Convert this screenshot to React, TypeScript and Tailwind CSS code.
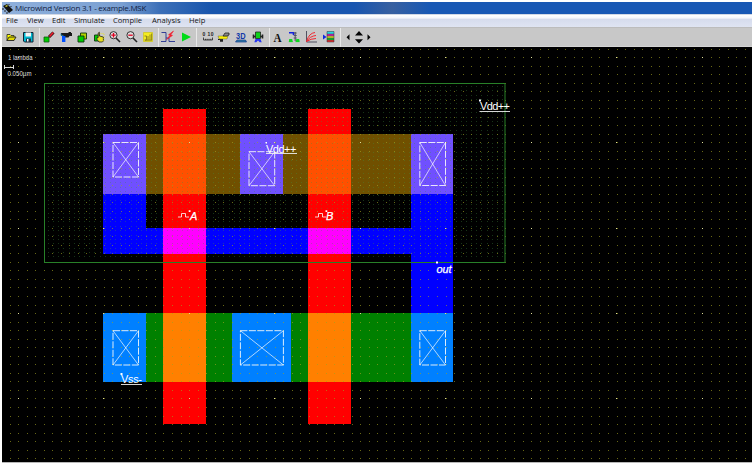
import type { ReactNode } from "react";

const menus: [string, string][] = [
  ["File", "w-[21px]"],
  ["View", "w-[25px]"],
  ["Edit", "w-[22px]"],
  ["Simulate", "w-[39px]"],
  ["Compile", "w-[39px]"],
  ["Analysis", "w-[37px]"],
  ["Help", "w-[30px]"],
];

function Icon({ children, w = "w-[16.5px]" }: { children: ReactNode; w?: string }) {
  return (
    <button className={`${w} flex h-4 shrink-0 items-center justify-center`}>
      <svg className="h-3 w-3 shrink-0 overflow-visible" viewBox="0 0 12 12" fill="none">
        {children}
      </svg>
    </button>
  );
}

function Sep() {
  return <span className="h-[19px] w-px shrink-0 bg-[#e8e8e8]" />;
}

function Lens({ plus }: { plus?: boolean }) {
  return (
    <Icon>
      <circle cx="4.5" cy="4.2" r="3.6" fill="#ddd" stroke="#222" strokeWidth="0.9" />
      <path d="M7 7 11 11" stroke="#222" strokeWidth="1.6" />
      <path d={plus ? "M2.3 4.2h4.4M4.5 2v4.4" : "M2.3 4.2h4.4"} stroke="#e00020" strokeWidth="1.3" />
    </Icon>
  );
}

function Toolbar() {
  return (
    <div className="flex h-5 items-center border-y border-t-[#bcbcbc] border-b-[#d4d4d4] bg-[#c8c8c8] pl-px">
      <Icon>
        <path d="M2 10V3.5h3l1 1h3V6" fill="#ff0" stroke="#222" strokeWidth="0.8" />
        <path d="M2 9.5 4 6h7L9 9.5z" fill="#e0d800" stroke="#222" strokeWidth="0.9" />
      </Icon>
      <Icon>
        <path d="M1.5 1.5h9.5v9.5H2.5l-1-1z" fill="#00b8d0" stroke="#123" />
        <path d="M3.5 1.5h5.5v4H3.5z" fill="#f4f4f4" />
        <path d="M4 7.5h5V11H4z" fill="#234" />
        <path d="M5 8h1.5v2.5H5z" fill="#fff" />
      </Icon>
      <span className="w-[3px]" />
      <Sep />
      <span className="w-px" />
      <Icon>
        <path d="M1 6h5v5H1z" fill="#0c0" stroke="#151" strokeWidth="0.8" />
        <path d="m6 6 4.5-4.5" stroke="#301010" strokeWidth="3" />
        <path d="m6.5 5.5 3.7-4" stroke="#f02030" strokeWidth="1.7" />
      </Icon>
      <Icon>
        <path d="M1 2h7.5V1H11v1h1v3H9.5l-1 1.5H5V5H1z" fill="#181818" />
        <path d="M2 5h3.4v6H2z" fill="#0050ff" />
        <path d="M1 2.4v2h2.5" stroke="#28b" strokeWidth="0.8" />
      </Icon>
      <Icon>
        <path d="M4.5 2h6v6h-6z" fill="#b0d000" stroke="#131" strokeWidth="0.9" />
        <path d="M2 5h6v6H2z" fill="#0c0" stroke="#131" strokeWidth="0.9" />
      </Icon>
      <Icon>
        <path d="M1.5 4h5v6h-5z" fill="#0c0" stroke="#131" strokeWidth="0.9" />
        <path d="M4 8.5V6.5h1.2V2l1.2-.8V5l4 1v4l-1 1H6z" fill="#e8e020" stroke="#222" strokeWidth="0.8" />
        <path d="M7.5 2.5H11V10" stroke="#e8e020" strokeWidth="0.8" strokeDasharray="1 1" />
      </Icon>
      <Lens plus />
      <Lens />
      <Icon>
        <path d="M1.5 1.5h9v9h-9z" fill="#f4ec20" stroke="#d0c820" strokeWidth="0.8" />
        <path d="M2.5 5h2v4h-2M6 9V5M8 9V3.5M9.6 9V2.5M3 9.2h7" stroke="#88801a" strokeWidth="0.9" />
      </Icon>
      <span className="w-px" />
      <Sep />
      <span className="w-px" />
      <Icon w="w-[17.5px]">
        <path d="M-.5 1.5H4v9H-1M4 7h3v3.5h6" stroke="#223090" strokeWidth="0.9" />
        <path d="M11.5 0 6.5 3.8l1.6.4L4.5 8.6l6-4.2-1.7-.6z" fill="#f02030" stroke="#f02030" strokeWidth="0.6" />
      </Icon>
      <Icon w="w-[17.5px]">
        <path d="M2 1.5 11 6 2 10.5z" fill="#00dc18" />
      </Icon>
      <span className="w-px" />
      <Sep />
      <span className="w-[3px]" />
      <Icon>
        <path d="M1.5 6.5V9h9V6.5M3.5 9V7.8M5.2 9V7.8M7 9V7.8M8.8 9V7.8" stroke="#222" strokeWidth="0.8" />
        <text x="0.5" y="5.4" fontSize="5" textLength="11" className="font-['Liberation_Sans'] font-bold" fill="#222">0 10</text>
      </Icon>
      <Icon>
        <path d="M0 8h5v2.8H2V9H0z" fill="#222" />
        <path d="M0 5h10l-1 3H1z" fill="#f8f000" stroke="#665" strokeWidth="0.5" />
        <path d="m5 5 2-3h4v2L9 5z" fill="#888" stroke="#222" strokeWidth="0.8" />
      </Icon>
      <Icon>
        <text x="1" y="8" fontSize="9" textLength="9.5" lengthAdjust="spacingAndGlyphs" className="font-['Liberation_Sans'] font-bold" fill="#1238a8">3D</text>
        <path d="m2 9-1.5 2H11.5l-1-2z" fill="#3480a0" stroke="#123890" strokeWidth="0.7" />
      </Icon>
      <Icon w="w-[17.5px]">
        <path d="M1.5 3.5v4M10.5 3.5v4M1 5.5h10" stroke="#222" strokeWidth="1.6" />
        <path d="M3.5 1h5v6.5h-5z" fill="#10d018" stroke="#222" strokeWidth="0.8" />
        <path d="m3.5 8-1.2 3.2h2L6 9.6l1.7 1.6h2L8.5 8z" fill="#2838f0" />
      </Icon>
      <span className="w-[2.5px]" />
      <Sep />
      <Icon w="w-[16px]">
        <text x="1.5" y="10.5" fontSize="12" textLength="8" lengthAdjust="spacingAndGlyphs" className="font-['Liberation_Serif'] font-bold" fill="#111">A</text>
      </Icon>
      <Icon>
        <path d="M1 1.8h4.5M5.5 1v3" stroke="#1020e0" strokeWidth="1.6" />
        <path d="M7.2 1v9M5.7 2h3M5.7 4.5h3M5.7 7h3" stroke="#556" strokeWidth="1.1" />
        <path d="M1.5 8.5h2.5v2H1.5zM8.5 8.5H11v2H8.5zM.8 10.6h4M7.5 10.6h4" stroke="#10d820" fill="#10d820" strokeWidth="1" />
      </Icon>
      <Icon w="w-[17px]">
        <path d="M1.5 0v11H12" stroke="#445" strokeWidth="0.9" />
        <path d="M1.5 10.5Q4 2 10 1.5M1.5 10.5Q5 5 11 4.5M1.5 10.5Q6 7.5 11 7.5" stroke="#f02830" />
      </Icon>
      <Icon w="w-[18px]">
        <path d="M4 .5h7V3H4z" fill="#28d8e0" />
        <path d="M4 3h7v2H4z" fill="#d020b0" />
        <path d="M4 5h7v2H4z" fill="#e0dc20" />
        <path d="M4 7h7v2H4z" fill="#10c028" />
        <path d="M4 9h7v2H4z" fill="#e83028" />
        <path d="M4 .5h7V11H4zM4 3h7M4 5h7M4 7h7M4 9h7" stroke="#334" strokeWidth="0.5" />
        <path d="M0 3.5v5L3.5 6z" fill="#1028e0" />
      </Icon>
      <span className="w-[2px]" />
      <Sep />
      <svg className="ml-[5px] h-[14px] w-[26px]" viewBox="0 -1 26 14" fill="#050505">
        <path d="M3.5 3.2v6L.5 6.2zM9 4.5l4-4.5 4 4.5zM9 8.2h8l-4 4.3zM21.5 3.2v6l3-3z" />
      </svg>
    </div>
  );
}

type Box = [number, number, number, number, string];

const layers: Box[] = [
  [163, 109, 43, 315, "#ff0000"],
  [308, 109, 43, 315, "#ff0000"],
  [103, 193, 43, 60, "#0000ff"],
  [146, 228, 307, 26, "#0000ff"],
  [103, 228, 43, 26, "#0000ff"],
  [411, 193, 42, 120, "#0000ff"],
  [163, 228, 43, 26, "#ff00ff"],
  [308, 228, 43, 26, "#ff00ff"],
  [103, 134, 350, 60, "#705000"],
  [103, 134, 43, 60, "#7050ff"],
  [240, 134, 43, 60, "#7050ff"],
  [411, 134, 42, 60, "#7050ff"],
  [163, 134, 43, 60, "#ff5000"],
  [308, 134, 43, 60, "#ff5000"],
  [103, 313, 350, 69, "#008000"],
  [103, 313, 43, 69, "#0080ff"],
  [232, 313, 59, 69, "#0080ff"],
  [411, 313, 42, 69, "#0080ff"],
  [163, 313, 43, 69, "#ff8000"],
  [308, 313, 43, 69, "#ff8000"],
];

const contacts: [number, number, number, number][] = [
  [113, 142.5, 25.5, 34.5],
  [249, 151.7, 25.7, 34],
  [419.8, 142.5, 25.7, 43],
  [113, 330.7, 25.5, 34.3],
  [240.4, 330.7, 43, 34.3],
  [419.8, 330.7, 25.7, 34.3],
];

const range = (n: number) => Array.from({ length: n }, (_, i) => i);

function Layout() {
  return (
    <svg
      className="block h-[415px] w-[750px] bg-black font-['Liberation_Sans',Arial,sans-serif]"
      viewBox="2 47 750 415"
    >
      <g shapeRendering="crispEdges">
        {layers.map(([x, y, width, height, fill], i) => (
          <rect key={i} x={x} y={y} width={width} height={height} fill={fill} />
        ))}
        {range(40).map((r) =>
          range(89).map((c) => (
            <rect key={`w${r}-${c}`} x={Math.round(48 + c * 5.16)} y={Math.round(86 + r * 4.37)} width="1" height="1" fill="#409040" opacity="0.36" />
          )),
        )}
        {range(49).map((r) =>
          range(87).map((c) => (
            <rect key={`g${r}-${c}`} x={Math.round(9.5 + c * 8.55)} y={Math.round(48.5 + r * 8.535)} width="1" height="1" fill="#a0a020" opacity="0.65" />
          )),
        )}
        {range(5).map((r) =>
          range(9).map((c) => (
            <rect key={`m${r}-${c}`} x={Math.round(17.7 + c * 85.5)} y={Math.round(57 + r * 85.35)} width="1" height="1" fill="#e0e098" />
          )),
        )}
      </g>
      <rect x="44.5" y="83.5" width="460.5" height="179" fill="none" stroke="#288028" />
      {contacts.map(([x, y, w, h], i) => (
        <g key={i} stroke="#fff" strokeWidth="0.85" fill="none">
          <rect x={x} y={y} width={w} height={h} strokeDasharray="7 1.5" />
          <path strokeOpacity="0.8" d={`M${x} ${y}l${w} ${h}M${x + w} ${y}l${-w} ${h}`} />
        </g>
      ))}
      <g fill="#fff" fontSize="11">
        <text x="480" y="110" textLength="30">Vdd++</text>
        <text x="266" y="152.5" textLength="30.5">Vdd++</text>
        <text x="121" y="383" textLength="21">Vss-</text>
        <g fontStyle="italic" stroke="#fff" strokeWidth="0.25">
          <text x="190" y="220.3">A</text>
          <text x="326" y="220.3">B</text>
          <text x="436.5" y="272.5" textLength="15">out</text>
        </g>
        <g fontSize="6.3" fill="#ddd">
          <text x="8" y="60" textLength="24.5" lengthAdjust="spacingAndGlyphs">1 lambda</text>
          <text x="7.5" y="75.5" textLength="24" lengthAdjust="spacingAndGlyphs">0.050µm</text>
        </g>
      </g>
      <path d="M479.5 111.5h30.5M266 153.5h31M121 384.5h21M4.5 67.5h9M4.5 65v4M13.5 65v4" stroke="#eee" strokeWidth="0.9" />
      <path d="M178 217h3.5v-3.5h4V217h3.5M315 217h3.5v-3.5h4V217h3.5" stroke="#fff" strokeWidth="0.8" fill="none" />
      <path d="M479 99.5h2v2h-2zM265.5 142h1.5v1.5h-1.5zM120.5 373h2v2h-2zM188.7 210.2h1.8v1.8h-1.8zM325.5 210.2h1.8v1.8h-1.8zM436 261.5h2v2h-2z" fill="#fff" />
    </svg>
  );
}

export default function App() {
  return (
    <div className="h-[465px] w-[754px] overflow-hidden bg-white px-[2px] pt-[2px] font-['Open_Sans',sans-serif]">
      <header className="flex h-3 items-center bg-[linear-gradient(90deg,#8fb0dc_0,#7aa0d2_16%,#3d70b8_21%,#1855ad_28%,#1855b0_47%,#3860a0_52%,#1858b4_57%,#1858b4_100%)]">
        <svg className="h-[11px] w-[11px] shrink-0" viewBox="0 0 11 11">
          <path d="m1 3 4-2 6 6-4 3z" fill="#111" />
          <path d="m3 3 2-1 1 1-2 1z" fill="#d0d030" />
          <path d="M1 5v2M3 7v2M5 9v2M7 1v1M9 3v1" stroke="#222" />
        </svg>
        <span className="ml-[2px] whitespace-nowrap text-[8px] leading-none tracking-[-0.25px] text-[#102040]">
          Microwind Version 3.1 - example.MSK
        </span>
      </header>
      <nav className="flex h-[13px] items-center bg-[linear-gradient(#a8b4cc_0,#fff_8%,#f5f6fb_30%,#d6dced_42%,#dfe4f2_100%)] pl-1 text-[7.6px] leading-none text-[#151515]">
        {menus.map(([label, w]) => (
          <span key={label} className={`${w} shrink-0 whitespace-nowrap`}>
            {label}
          </span>
        ))}
      </nav>
      <Toolbar />
      <Layout />
      <div className="h-px bg-[#b8b8b8]" />
    </div>
  );
}
